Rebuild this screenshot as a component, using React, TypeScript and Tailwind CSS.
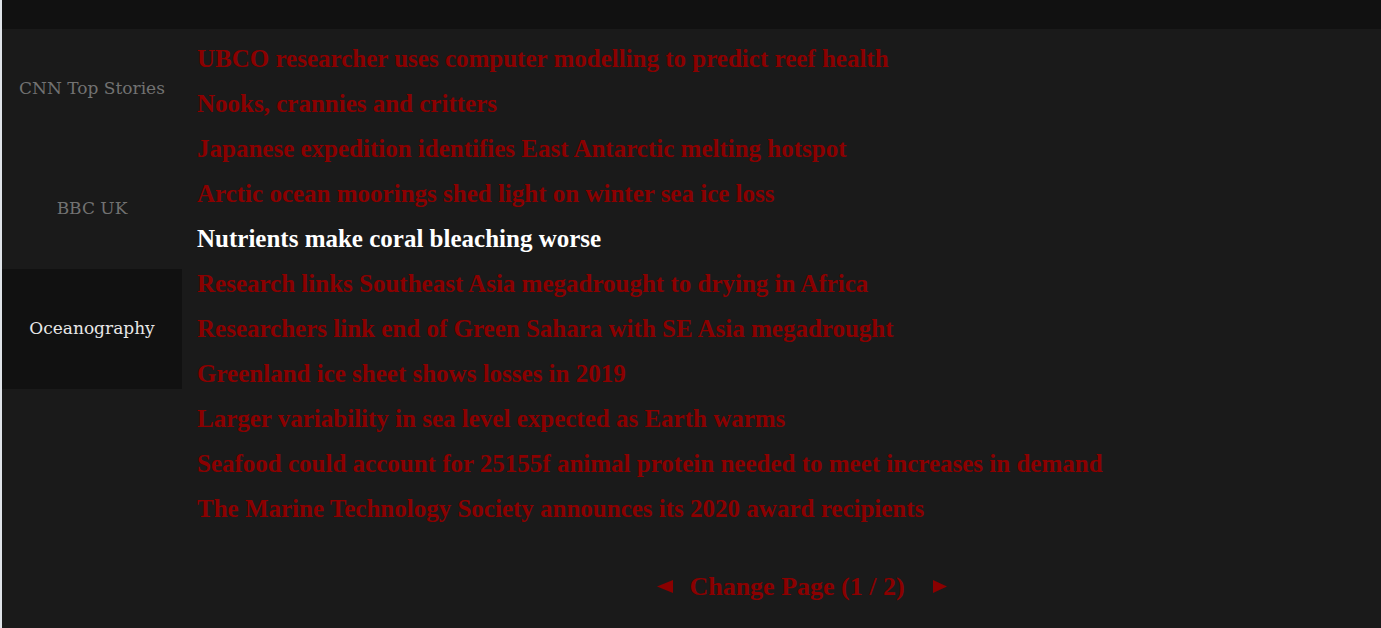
import React from 'react';

const feeds = ['CNN Top Stories', 'BBC UK', 'Oceanography'];

const headlines = [
  'UBCO researcher uses computer modelling to predict reef health',
  'Nooks, crannies and critters',
  'Japanese expedition identifies East Antarctic melting hotspot',
  'Arctic ocean moorings shed light on winter sea ice loss',
  'Nutrients make coral bleaching worse',
  'Research links Southeast Asia megadrought to drying in Africa',
  'Researchers link end of Green Sahara with SE Asia megadrought',
  'Greenland ice sheet shows losses in 2019',
  'Larger variability in sea level expected as Earth warms',
  'Seafood could account for 25155f animal protein needed to meet increases in demand',
  'The Marine Technology Society announces its 2020 award recipients',
];

export default function App() {
  const active = 2;
  const hovered = 4;
  return (
    <div className="flex h-[628px] w-[1381px] overflow-hidden bg-[#1a1a1a]">
      <div className="w-[2px] shrink-0 bg-[#dfe3e8]" />
      <div className="flex flex-1 flex-col">
        <div className="h-[29px] shrink-0 bg-[#111111]" />
        <div className="flex flex-1">
          <div className="flex w-[180px] shrink-0 flex-col font-['DejaVu_Serif',serif] text-[17px]">
            {feeds.map((f, i) => (
              <div
                key={f}
                className={`flex h-[120px] items-center justify-center ${
                  i === active ? 'bg-[#111111] text-[#e8e8e8]' : 'text-[#727272]'
                }`}
              >
                {f}
              </div>
            ))}
          </div>
          <div className="flex flex-1 flex-col pl-[15px] pt-[15px] font-['Liberation_Serif',serif] text-[25px] font-bold">
            {headlines.map((h, i) => (
              <div
                key={h}
                className={`h-[45px] whitespace-nowrap leading-[30px] ${
                  i === hovered ? 'text-white' : 'text-[#8b0000]'
                }`}
              >
                {h}
              </div>
            ))}
            <div className="mt-[33px] flex items-center justify-center pl-[26px] text-[#8b0000]">
              {/* prev / next arrows */}
              <svg width="16" height="13" viewBox="0 0 16 13" className="-mt-[2px]">
                <path d="M0 6.5 L16 0 L16 13 Z" fill="currentColor" />
              </svg>
              <span className="ml-[16px] text-[26px] leading-[30px]">Change Page (1 / 2)</span>
              <svg width="14" height="13" viewBox="0 0 14 13" className="-mt-[2px] ml-[28px]">
                <path d="M14 6.5 L0 0 L0 13 Z" fill="currentColor" />
              </svg>
            </div>
          </div>
        </div>
      </div>
    </div>
  );
}
